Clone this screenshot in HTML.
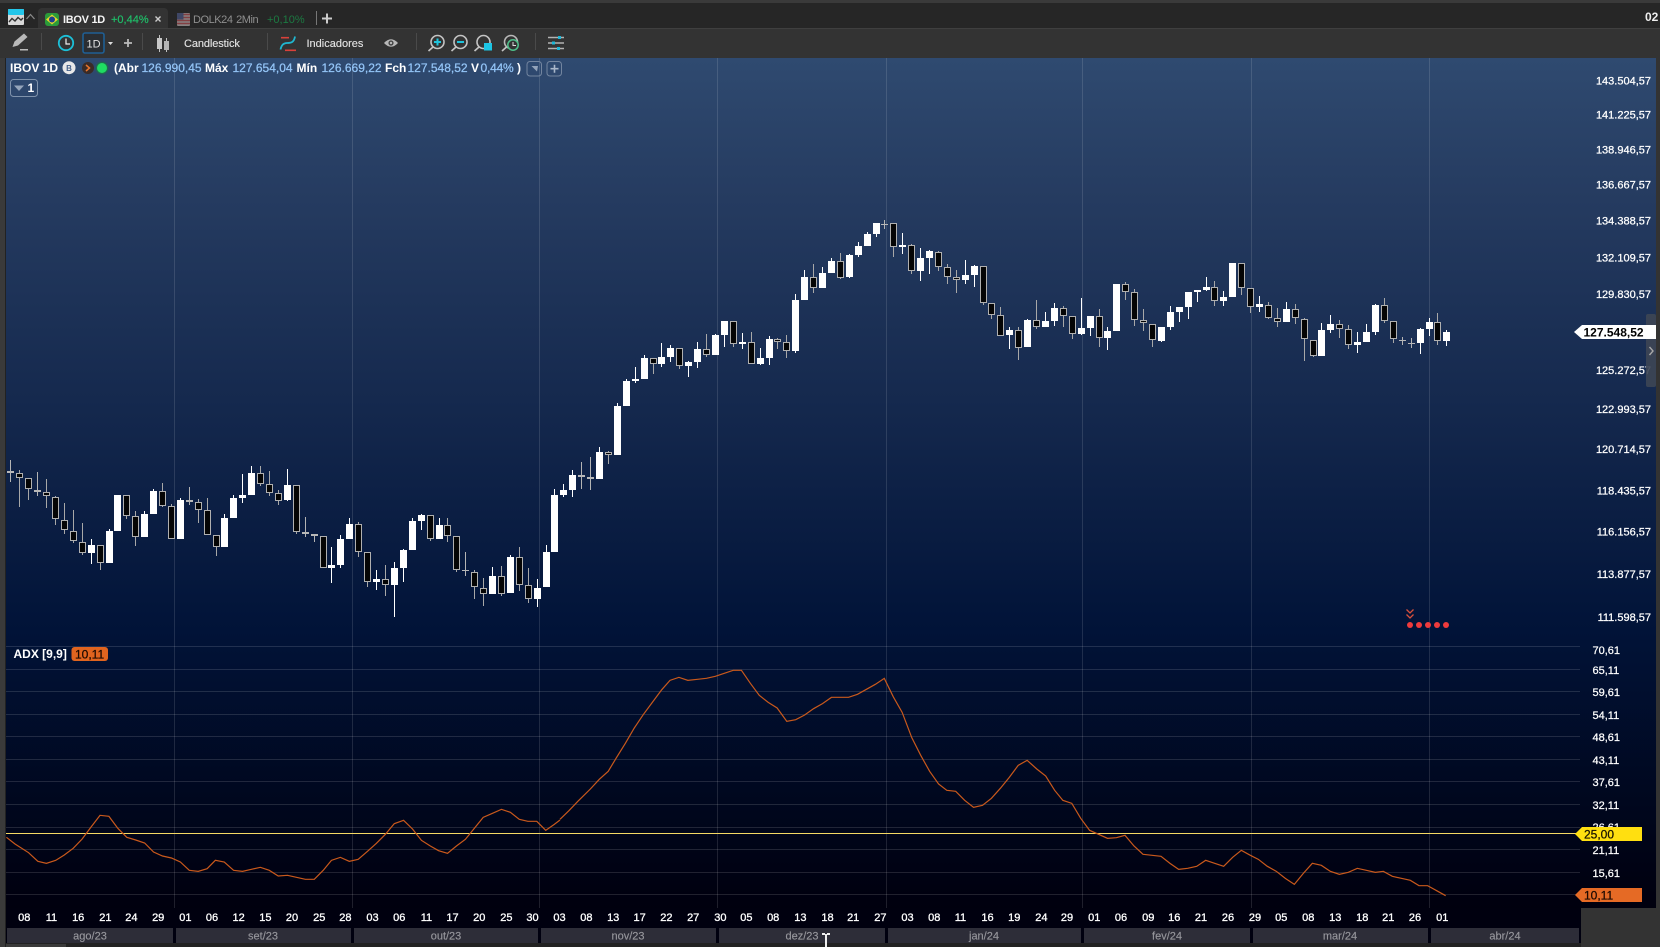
<!DOCTYPE html>
<html lang="pt">
<head>
<meta charset="utf-8">
<title>IBOV 1D</title>
<style>
html,body{margin:0;padding:0;background:#333;width:1660px;height:947px;overflow:hidden}
svg{position:absolute;left:0;top:0;display:block}
text{font-family:"Liberation Sans",Arial,sans-serif;font-size:11px;fill:#fff}
.p{text-anchor:end;fill:#fff;stroke:#fff;stroke-width:.25px}
.a{fill:#fff;stroke:#fff;stroke-width:.25px}
.t{text-anchor:middle;fill:#fff;stroke:#fff;stroke-width:.3px}
.m{text-anchor:middle;fill:#96969c;stroke:#96969c;stroke-width:.15px}
.b{font-size:12px;font-weight:bold}
.n{font-size:12px;fill:#93c4f6;stroke:#93c4f6;stroke-width:.25px}
.tb{fill:#e4e4e4;stroke:#e4e4e4;stroke-width:.12px}
.k{stroke-width:.25px}
</style>
</head>
<body>
<svg width="1660" height="947" viewBox="0 0 1660 947">
<defs>
<linearGradient id="bg" x1="0" y1="58" x2="0" y2="945" gradientUnits="userSpaceOnUse">
<stop offset="0" stop-color="#2f4a70"/>
<stop offset=".16" stop-color="#253b60"/>
<stop offset=".385" stop-color="#15294e"/>
<stop offset=".645" stop-color="#011338"/>
<stop offset=".95" stop-color="#00000f"/>
<stop offset="1" stop-color="#00000c"/>
</linearGradient>
</defs>

<!-- shell -->
<rect width="1660" height="947" fill="#333"/>
<rect y="0" width="1660" height="3" fill="#3a3a3a"/>
<rect y="3" width="1660" height="25" fill="#262626"/>
<rect y="28" width="1660" height="30" fill="#333"/>
<rect y="28" width="1660" height="1" fill="#3f3f3f"/>
<rect x="0" y="58" width="5" height="889" fill="#3a3a3a"/>
<rect x="5" y="58" width="1" height="889" fill="#222"/>

<!-- chart bg -->
<rect x="6" y="58" width="1650" height="850" fill="url(#bg)"/>
<rect x="6" y="908" width="1575" height="37" fill="#00000f"/>
<rect x="1581" y="908" width="79" height="39" fill="#333"/>
<rect x="1656" y="58" width="4" height="850" fill="#333"/>
<rect x="6" y="943" width="1575" height="4" fill="#222"/>
<rect x="6" y="944" width="60" height="3" fill="#3a3a3a"/>

<!-- tab bar -->
<rect x="8" y="9" width="16" height="16" rx="1" fill="#d9d9d9"/>
<rect x="8" y="9" width="16" height="6" rx="1" fill="#23c6ea"/>
<polyline points="9,22 12,18.5 15,21 18,17.5 21,20 23,18" fill="none" stroke="#333" stroke-width="1.4"/>
<polyline points="26.5,19 30.5,14.5 34.5,19" fill="none" stroke="#8a8a8a" stroke-width="1.2"/>
<path d="M38 28V12a4 4 0 0 1 4-4h122a4 4 0 0 1 4 4v16z" fill="#333"/>
<rect x="45" y="13" width="14" height="13" rx="3" fill="#2b9b3a"/>
<polygon points="52,14.5 58,19.5 52,24.5 46,19.5" fill="#e7d52c"/>
<circle cx="52" cy="19.5" r="3" fill="#1d3f8f"/>
<text x="63" y="23" font-weight="bold" style="letter-spacing:-.3px;fill:#f4f4f4">IBOV 1D</text>
<text x="111" y="23" style="fill:#1fc06a;stroke:#1fc06a;stroke-width:.15px">+0,44%</text>
<path d="M155.5 16.5l5 5m0-5l-5 5" stroke="#ccc" stroke-width="1.4" fill="none"/>
<g opacity=".75">
<rect x="177" y="13" width="13" height="13" rx="1" fill="#a9a0a0"/>
<path d="M177 14.5h13M177 17.5h13M177 20.5h13M177 23.5h13" stroke="#a2484c" stroke-width="1.4"/>
<rect x="177" y="13" width="6.5" height="6.5" fill="#48527c"/>
</g>
<text x="193" y="23" style="letter-spacing:-.45px;word-spacing:1px;fill:#8f8f8f">DOLK24 2Min</text>
<text x="267" y="23" style="fill:#1c7a42">+0,10%</text>
<rect x="316" y="11" width="1" height="14" fill="#777"/>
<path d="M322 18.5h10M327 13.5v10" stroke="#ccc" stroke-width="2"/>
<text x="1645" y="21" class="b" style="fill:#eee">02</text>

<!-- toolbar -->
<path d="M12.5 47l2-5.5 9.5-8 3.5 3.5-9.5 8.5z" fill="#b9b9b9"/>
<rect x="20" y="49" width="8" height="1.5" fill="#bbb"/>
<rect x="41" y="33" width="1" height="17" fill="#4a4a4a"/>
<circle cx="66" cy="43" r="7.2" fill="none" stroke="#1cc0d8" stroke-width="1.8"/>
<polyline points="66,38.5 66,44 70,44" fill="none" stroke="#eee" stroke-width="1.2"/>
<rect x="83" y="33" width="21" height="20" rx="2" fill="#2a2e33" stroke="#1f5f94" stroke-width="1.6"/>
<text x="93.5" y="47.5" style="text-anchor:middle;fill:#e2e2e2">1D</text>
<polygon points="108,42 113,42 110.5,45" fill="#ddd"/>
<path d="M124 43h8M128 39v8" stroke="#bbb" stroke-width="1.8"/>
<rect x="142" y="33" width="1" height="17" fill="#4a4a4a"/>
<path d="M159.5 35v17M166.5 38v14" stroke="#c2c2c2" stroke-width="1"/>
<rect x="157" y="38" width="5" height="11" fill="#c8c8c8"/>
<rect x="164" y="41" width="5" height="9" fill="#b5b5b5"/>
<text x="184" y="47" class="tb" style="letter-spacing:-.1px">Candlestick</text>
<rect x="267" y="33" width="1" height="17" fill="#4a4a4a"/>
<path d="M281 37.7h8" stroke="#d9413a" stroke-width="1.6"/>
<path d="M285 50.3h11" stroke="#d9413a" stroke-width="1.6"/>
<path d="M280.5 49.5c1-5 3.5-6.5 6.5-6.5 4 0 7-.5 8-6.5" fill="none" stroke="#20b6cf" stroke-width="1.8"/>
<text x="306.5" y="47" class="tb">Indicadores</text>
<path d="M384 43Q391 35.5 398 43Q391 50.5 384 43Z" fill="#b8b8b8"/>
<circle cx="391" cy="43" r="2.6" fill="#444"/>
<circle cx="391" cy="43" r="1.2" fill="#b8b8b8"/>
<rect x="416" y="33" width="1" height="17" fill="#4a4a4a"/>
<g fill="none" stroke="#c4c4c4" stroke-width="1.6">
<circle cx="437.5" cy="42" r="6.5"/><path d="M433 47l-4.5 4"/>
<circle cx="460.5" cy="42" r="6.5"/><path d="M456 47l-4.5 4"/>
<circle cx="483.5" cy="42" r="6.5"/><path d="M479 47l-4.5 4"/>
<circle cx="511" cy="42" r="6.5" stroke="#b9b9b9"/><path d="M506.5 47l-4.5 4"/>
</g>
<path d="M434 42h7M437.5 38.5v7" stroke="#1fc4dd" stroke-width="2"/>
<path d="M457 42h7" stroke="#1fc4dd" stroke-width="2"/>
<rect x="484" y="43" width="8" height="7.5" fill="#1cc4e4"/>
<circle cx="513" cy="45" r="5.2" fill="#333" stroke="#4fc08a" stroke-width="1.5"/>
<polyline points="513,42 513,45.5 516,45.5" fill="none" stroke="#ddd" stroke-width="1"/>
<rect x="535" y="33" width="1" height="17" fill="#4a4a4a"/>
<path d="M548 37.5h16M548 43h16M548 48.5h16" stroke="#b2b2b2" stroke-width="1.6"/>
<rect x="558" y="36" width="3" height="3" fill="#1cb8d8"/>
<rect x="552" y="41.5" width="3" height="3" fill="#1cb8d8"/>
<rect x="557" y="47" width="3" height="3" fill="#1cb8d8"/>

<!-- vertical grid -->
<g fill="#fff" fill-opacity=".12" shape-rendering="crispEdges">
<rect x="174" y="58" width="1" height="850"/><rect x="352" y="58" width="1" height="850"/>
<rect x="539" y="58" width="1" height="850"/><rect x="717" y="58" width="1" height="850"/>
<rect x="886" y="58" width="1" height="850"/><rect x="1082" y="58" width="1" height="850"/>
<rect x="1251" y="58" width="1" height="850"/><rect x="1429" y="58" width="1" height="850"/>
</g>
<!-- adx horizontal grid -->
<g fill="#fff" fill-opacity=".13" shape-rendering="crispEdges">
<rect x="6" y="646" width="1574" height="1"/><rect x="6" y="669" width="1574" height="1"/>
<rect x="6" y="691" width="1574" height="1"/><rect x="6" y="714" width="1574" height="1"/>
<rect x="6" y="736" width="1574" height="1"/><rect x="6" y="759" width="1574" height="1"/>
<rect x="6" y="781" width="1574" height="1"/><rect x="6" y="804" width="1574" height="1"/>
<rect x="6" y="827" width="1574" height="1"/><rect x="6" y="849" width="1574" height="1"/>
<rect x="6" y="872" width="1574" height="1"/><rect x="6" y="894" width="1574" height="1"/>
</g>

<!-- header -->
<text x="10" y="72" class="b">IBOV 1D</text>
<circle cx="69" cy="67.7" r="6.5" fill="#e8e8e8"/>
<text x="69" y="71" style="font-size:8px;font-weight:bold;text-anchor:middle;fill:#44608a">B</text>
<circle cx="88" cy="68" r="6" fill="#3b2b26"/>
<polyline points="86,65 89.5,68 86,71" fill="none" stroke="#e8742c" stroke-width="1.5"/>
<circle cx="102" cy="68" r="6.4" fill="#1f6a4e"/>
<circle cx="102" cy="68" r="5" fill="#1fdc62"/>
<text x="114" y="72" class="b">(Abr</text><text x="141.5" y="72" class="n">126.990,45</text>
<text x="205" y="72" class="b">Máx</text><text x="232.5" y="72" class="n">127.654,04</text>
<text x="296.5" y="72" class="b">Mín</text><text x="321.5" y="72" class="n">126.669,22</text>
<text x="385" y="72" class="b">Fch</text><text x="407.5" y="72" class="n">127.548,52</text>
<text x="471" y="72" class="b">V</text><text x="480.5" y="72" class="n" style="letter-spacing:-.2px">0,44%</text>
<text x="517" y="72" class="b">)</text>
<rect x="527" y="61.5" width="14.5" height="14.5" rx="3" fill="none" stroke="#73859f"/>
<polygon points="531.5,66 538,66 537,71.5" fill="#93a3ba"/>
<rect x="547" y="61.5" width="14.5" height="14.5" rx="3" fill="none" stroke="#73859f"/>
<path d="M550.5 68.7h8M554.5 64.7v8" stroke="#a9b7ca" stroke-width="1.6"/>
<rect x="10.5" y="79.5" width="27" height="17" rx="3" fill="none" stroke="#7f92ab"/>
<polygon points="14,85.5 24,85.5 19,91" fill="#95a5bb"/>
<text x="27.5" y="92" class="b">1</text>

<!-- price axis -->
<text class="p" x="1651" y="84.5">143.504,57</text>
<text class="p" x="1651" y="118.5">141.225,57</text>
<text class="p" x="1651" y="153.5">138.946,57</text>
<text class="p" x="1651" y="188.5">136.667,57</text>
<text class="p" x="1651" y="224.5">134.388,57</text>
<text class="p" x="1651" y="261.5">132.109,57</text>
<text class="p" x="1651" y="298">129.830,57</text>
<text class="p" x="1651" y="374">125.272,57</text>
<text class="p" x="1651" y="413">122.993,57</text>
<text class="p" x="1651" y="453">120.714,57</text>
<text class="p" x="1651" y="494.5">118.435,57</text>
<text class="p" x="1651" y="535.5">116.156,57</text>
<text class="p" x="1651" y="578">113.877,57</text>
<text class="p" x="1651" y="621">111.598,57</text>

<!-- handle -->
<rect x="1646" y="314" width="10" height="73" rx="2" fill="#3d4555" fill-opacity=".92"/>
<polyline points="1649.5,347 1653,351 1649.5,355" fill="none" stroke="#a8a8a8" stroke-width="1.4"/>
<!-- price tag -->
<polygon points="1574,332 1582,325 1656,325 1656,339 1582,339" fill="#fff"/>
<text x="1583.5" y="336.5" class="b" style="fill:#000">127.548,52</text>

<!-- candles -->
<g id="c" shape-rendering="crispEdges"></g>

<!-- signal -->
<g fill="#ee3a3c">
<circle cx="1410" cy="625" r="3"/><circle cx="1419" cy="625" r="3"/><circle cx="1428" cy="625" r="3"/>
<circle cx="1437" cy="625" r="3"/><circle cx="1446" cy="625" r="3"/>
</g>
<path d="M1406.5 609.5l3.5 3.5 3.5-3.5M1406.5 614.5l3.5 3.5 3.5-3.5" fill="none" stroke="#d8503c" stroke-width="1.3"/>

<!-- ADX -->
<text x="13.5" y="658" class="b">ADX [9,9]</text>
<rect x="71.5" y="647" width="36.5" height="14" rx="3" fill="#e0641f"/>
<text x="75" y="658.3" class="k" style="font-size:12px;fill:#1c0a02;stroke:#1c0a02">10,11</text>

<rect x="6" y="833" width="1570" height="1" fill="#f6d964" shape-rendering="crispEdges"/>

<g fill="none" stroke="#c9591c" stroke-width="1.2">
<g transform="translate(0,640) scale(.35714,.33333)">
<polyline vector-effect="non-scaling-stroke" points="18,592 42,612 80,638 106,664 130,670 156,661 180,645 205,625 230,597 255,561 280,526 305,529 330,565 355,592 380,600 405,609 430,636 455,648 480,654 505,666 530,691 555,694 580,686 603,661 628,666 654,691 679,694 704,688 729,682 754,691 779,708 805,706 830,712 855,718 880,718 905,691 928,661 953,652 978,664 1003,658 1029,634 1054,610 1079,583 1104,551 1130,541 1155,567 1180,601 1205,618 1228,632 1253,640 1278,618 1303,598 1328,565 1353,532 1379,520 1404,508 1429,517 1454,538 1478,544 1503,544 1528,571 1552,553 1568,540"/>
</g>
<g transform="translate(560,640) scale(.35714,.33333)">
<polyline vector-effect="non-scaling-stroke" points="0,538 25,512 50,484 85,447 110,418 135,394 158,353 183,310 208,264 233,224 258,188 285,149 308,121 333,112 358,121 385,118 410,115 435,109 460,100 485,91 508,91 533,130 558,166 583,187 608,204 635,244 660,239 685,225 710,206 735,191 760,172 783,172 808,172 833,163 858,148 883,133 908,115 933,170 958,217 985,293 1010,346 1035,394 1060,432 1083,451 1108,454 1133,481 1158,502 1183,496 1208,475 1233,445 1258,412 1283,376 1308,361 1335,387 1360,408 1385,451 1408,481 1433,490 1458,535 1483,571 1508,583 1533,595 1558,593 1568,590"/>
</g>
<g transform="translate(1120,640) scale(.33333,.33333)">
<polyline vector-effect="non-scaling-stroke" points="0,590 15,586 42,618 69,643 96,646 123,649 150,670 176,688 203,685 230,679 257,661 284,670 311,679 338,652 364,631 391,646 415,658 442,679 469,694 496,715 523,733 550,700 577,670 604,676 631,694 658,703 685,697 712,685 739,691 766,697 790,694 817,709 844,715 871,721 897,737 923,737 950,752 977,767"/>
</g>
</g>

<!-- adx axis -->
<text class="a" x="1592.5" y="654">70,61</text><text class="a" x="1592.5" y="674">65,11</text>
<text class="a" x="1592.5" y="696">59,61</text><text class="a" x="1592.5" y="719">54,11</text>
<text class="a" x="1592.5" y="741">48,61</text><text class="a" x="1592.5" y="764">43,11</text>
<text class="a" x="1592.5" y="786">37,61</text><text class="a" x="1592.5" y="809">32,11</text>
<text class="a" x="1592.5" y="831">26,61</text><text class="a" x="1592.5" y="854">21,11</text>
<text class="a" x="1592.5" y="877">15,61</text>
<polygon points="1575,834 1582,827 1642,827 1642,841 1582,841" fill="#ffdf10"/>
<text x="1584" y="838.5" class="k" style="font-size:12px;fill:#1a1400;stroke:#1a1400">25,00</text>
<polygon points="1575,895 1582,888 1642,888 1642,902 1582,902" fill="#e56a25"/>
<text x="1584" y="899.5" class="k" style="font-size:12px;fill:#1c0a02;stroke:#1c0a02">10,11</text>

<!-- time axis -->
<g>
<text class="t" x="24.3" y="921">08</text><text class="t" x="51.4" y="921">11</text><text class="t" x="78.2" y="921">16</text>
<text class="t" x="105.4" y="921">21</text><text class="t" x="131.4" y="921">24</text><text class="t" x="158.2" y="921">29</text>
<text class="t" x="185.4" y="921">01</text><text class="t" x="212" y="921">06</text><text class="t" x="238.6" y="921">12</text>
<text class="t" x="265.4" y="921">15</text><text class="t" x="292" y="921">20</text><text class="t" x="319.3" y="921">25</text>
<text class="t" x="345.4" y="921">28</text><text class="t" x="372.5" y="921">03</text><text class="t" x="399.3" y="921">06</text>
<text class="t" x="426.4" y="921">11</text><text class="t" x="452.5" y="921">17</text><text class="t" x="479.3" y="921">20</text>
<text class="t" x="506.4" y="921">25</text><text class="t" x="532.5" y="921">30</text><text class="t" x="559.5" y="921">03</text>
<text class="t" x="586.4" y="921">08</text><text class="t" x="613.2" y="921">13</text><text class="t" x="639.6" y="921">17</text>
<text class="t" x="666.4" y="921">22</text><text class="t" x="693.2" y="921">27</text><text class="t" x="720.4" y="921">30</text>
<text class="t" x="746.4" y="921">05</text><text class="t" x="773.2" y="921">08</text><text class="t" x="800.4" y="921">13</text>
<text class="t" x="827.5" y="921">18</text><text class="t" x="853.2" y="921">21</text><text class="t" x="880.4" y="921">27</text>
<text class="t" x="907.5" y="921">03</text><text class="t" x="934.3" y="921">08</text><text class="t" x="960.4" y="921">11</text>
<text class="t" x="987.5" y="921">16</text><text class="t" x="1014.3" y="921">19</text><text class="t" x="1041.4" y="921">24</text>
<text class="t" x="1067" y="921">29</text><text class="t" x="1094.3" y="921">01</text><text class="t" x="1121" y="921">06</text>
<text class="t" x="1148.3" y="921">09</text><text class="t" x="1174.3" y="921">16</text><text class="t" x="1201" y="921">21</text>
<text class="t" x="1228" y="921">26</text><text class="t" x="1255" y="921">29</text><text class="t" x="1281.3" y="921">05</text>
<text class="t" x="1308.3" y="921">08</text><text class="t" x="1335.3" y="921">13</text><text class="t" x="1362.3" y="921">18</text>
<text class="t" x="1388.3" y="921">21</text><text class="t" x="1415" y="921">26</text><text class="t" x="1442.3" y="921">01</text>
</g>
<!-- months -->
<g fill="#2d2d38" shape-rendering="crispEdges">
<rect x="7" y="928" width="166" height="15"/><rect x="176" y="928" width="175" height="15"/>
<rect x="354" y="928" width="184" height="15"/><rect x="541" y="928" width="175" height="15"/>
<rect x="719" y="928" width="166" height="15"/><rect x="888" y="928" width="193" height="15"/>
<rect x="1084" y="928" width="166" height="15"/><rect x="1253" y="928" width="175" height="15"/>
<rect x="1431" y="928" width="148" height="15"/>
</g>
<text class="m" x="90" y="939.5">ago/23</text><text class="m" x="263" y="939.5">set/23</text>
<text class="m" x="446" y="939.5">out/23</text><text class="m" x="628" y="939.5">nov/23</text>
<text class="m" x="802" y="939.5">dez/23</text><text class="m" x="984" y="939.5">jan/24</text>
<text class="m" x="1167" y="939.5">fev/24</text><text class="m" x="1340" y="939.5">mar/24</text>
<text class="m" x="1505" y="939.5">abr/24</text>
<!-- cursor -->
<g fill="#eee" shape-rendering="crispEdges">
<rect x="825" y="934" width="2" height="13"/>
<rect x="822" y="933" width="3" height="2"/><rect x="827" y="933" width="3" height="2"/>
</g>
</svg>
<script>
(function(){
var G=[
[430,"90 123 128 155 d,120 130 143 230 b,145 145 178 209 b,126 180 185 197 d,147 187 199 233 b,198 202 268 284 b,219 271 301 311 b,240 304 334 338 b,279 337 368 374 b,327 345 369 402 w,346 346 398 419 b,297 303 399 399 w,195 195 303 303 w,196 196 257 266 b,243 259 320 347 b,243 252 321 321 w,177 183 252 252 w,159 184 227 231 b,222 229 326 326 b,204 210 327 327 w,171 210 216 225 d,207 217 239 279 b,204 241 314 314 b,316 316 350 378 b,252 264 351 351 w,195 204 264 264 w,132 195 204 219 w,108 129 195 195 w,108 130 161 168 b,123 163 188 198 b,180 190 212 225 b,117 165 210 213 w,166 166 305 312 b,261 306 312 321 d,312 312 317 336 d,319 319 413 413 b,351 405 414 459 w,315 327 405 414 w,264 282 327 327 w,276 283 365 381 b,367 367 455 471 b,420 447 456 480 w,405 448 464 498 b,396 414 465 561 w,357 360 414 456 w,264 273 360 360 w,252 255 273 300 w,256 256 326 333 b,264 285 327 327 w,264 286 317 336 b,319 319 419 426 b,366 420 423 438 d,420 427 470 507 b,444 475 491 528 b,411 438 492 492 w,408 439 491 498 b,375 381 489 489 w,351 382 464 483 b,414 466 506 519 b,447 474 507 531 w"],
[370,"525 546 651 651 w,357 375 546 546 w,342 360 375 381 w,300 315 360 381 w,276 315 320 357 d,261 321 327 360 d,231 246 327 327 w,243 246 255 282 b,99 108 255 255 w,27 33 108 108 w"],
[200,"501 537 543 549 w,465 474 537 537 w,474 475 491 522 b,429 471 492 501 w,435 444 471 486 w,445 445 497 507 b,483 486 498 531 w,426 447 486 504 w,402 448 464 471 b,402 405 465 465 w,363 363 405 441 w,364 364 431 441 b,399 426 431 447 w,396 427 491 491 b,444 474 492 495 w,408 417 474 495 w,414 418 425 447 b,405 427 452 474 b,282 300 453 459 w,210 231 300 300 w,192 232 263 279 b,201 219 264 264 w,174 183 219 219 w,159 184 233 237 b,162 165 231 234 w,126 138 165 171 w,96 102 138 138 w,69 69 102 111 w,60 72 73 87 d,70 70 140 171 b,99 135 141 162 w,132 136 212 222 b,144 174 213 243 w,150 153 174 222 w,153 157 200 213 b,192 202 230 252 b,210 232 239 279 b,180 225 240 252 w,195 198 225 261 w,199 199 308 315 b,310 310 344 357 b,321 346 407 407 b,381 390 405 447 w,381 391 443 480 b,357 360 441 441 w,300 361 380 387 b,336 363 381 381 w,309 324 363 378 w,318 325 347 381 b,349 349 401 417 b,294 384 402 405 w,348 348 384 408 w,327 349 413 441 b"],
[240,"261 273 294 330 w,132 132 273 273 w,126 132 155 180 b,147 157 239 258 b,207 241 250 273 b,253 253 301 321 b,261 261 303 306 w,198 216 261 270 w,201 201 216 246 w,156 156 201 237 w,150 150 156 186 w,111 141 150 153 w,123 142 182 198 b,153 171 183 198 w,69 69 171 171 w,70 70 143 165 b,145 145 200 219 b,168 192 201 216 w,186 196 233 237 b,204 235 245 261 b,186 207 246 246 w,192 208 233 252 b,234 238 298 363 b,301 301 347 351 b,249 270 348 348 w,225 252 270 279 w,240 253 266 294 b,255 268 314 327 b,276 306 315 339 w,252 276 306 306 w,192 195 276 285 w,174 196 242 249 b,244 244 298 309 b,291 300 304 315 d,294 309 310 324 d,264 267 309 342 w,234 246 267 288 w,219 247 302 315 b,270 276 303 318 w"]
];
var h="",i=0;
function R(x,y,w,hh,f){return '<rect x="'+x+'" y="'+y+'" width="'+w+'" height="'+hh+'" fill="'+f+'"/>';}
G.forEach(function(g){
  var y0=g[0];
  g[1].split(",").forEach(function(s){
    var p=s.split(" "),k=p[4];
    var a=Math.round(y0+p[0]/3),t=Math.round(y0+p[1]/3),b=Math.round(y0+p[2]/3),l=Math.round(y0+p[3]/3);
    if(b<=t)b=t+1;
    var x=Math.round(10.4+8.919*i),bl=x-3;
    var wc=k=="w"?"#ffffff":(k=="d"?"#b4b4b4":"#a8a8a8");
    if(l>a)h+=R(x,a,1,l-a,wc);
    if(k=="w")h+=R(bl,t,7,b-t,"#ffffff");
    else if(k=="d")h+=R(bl,t,7,b-t,"#b8b8b8");
    else{
      h+=R(bl,t,7,b-t,"#b0b0b0");
      if(b-t>2)h+=R(bl+1,t+1,5,b-t-2,"#050505");
    }
    i++;
  });
});
document.getElementById("c").innerHTML=h;
})();
</script>
</body>
</html>
